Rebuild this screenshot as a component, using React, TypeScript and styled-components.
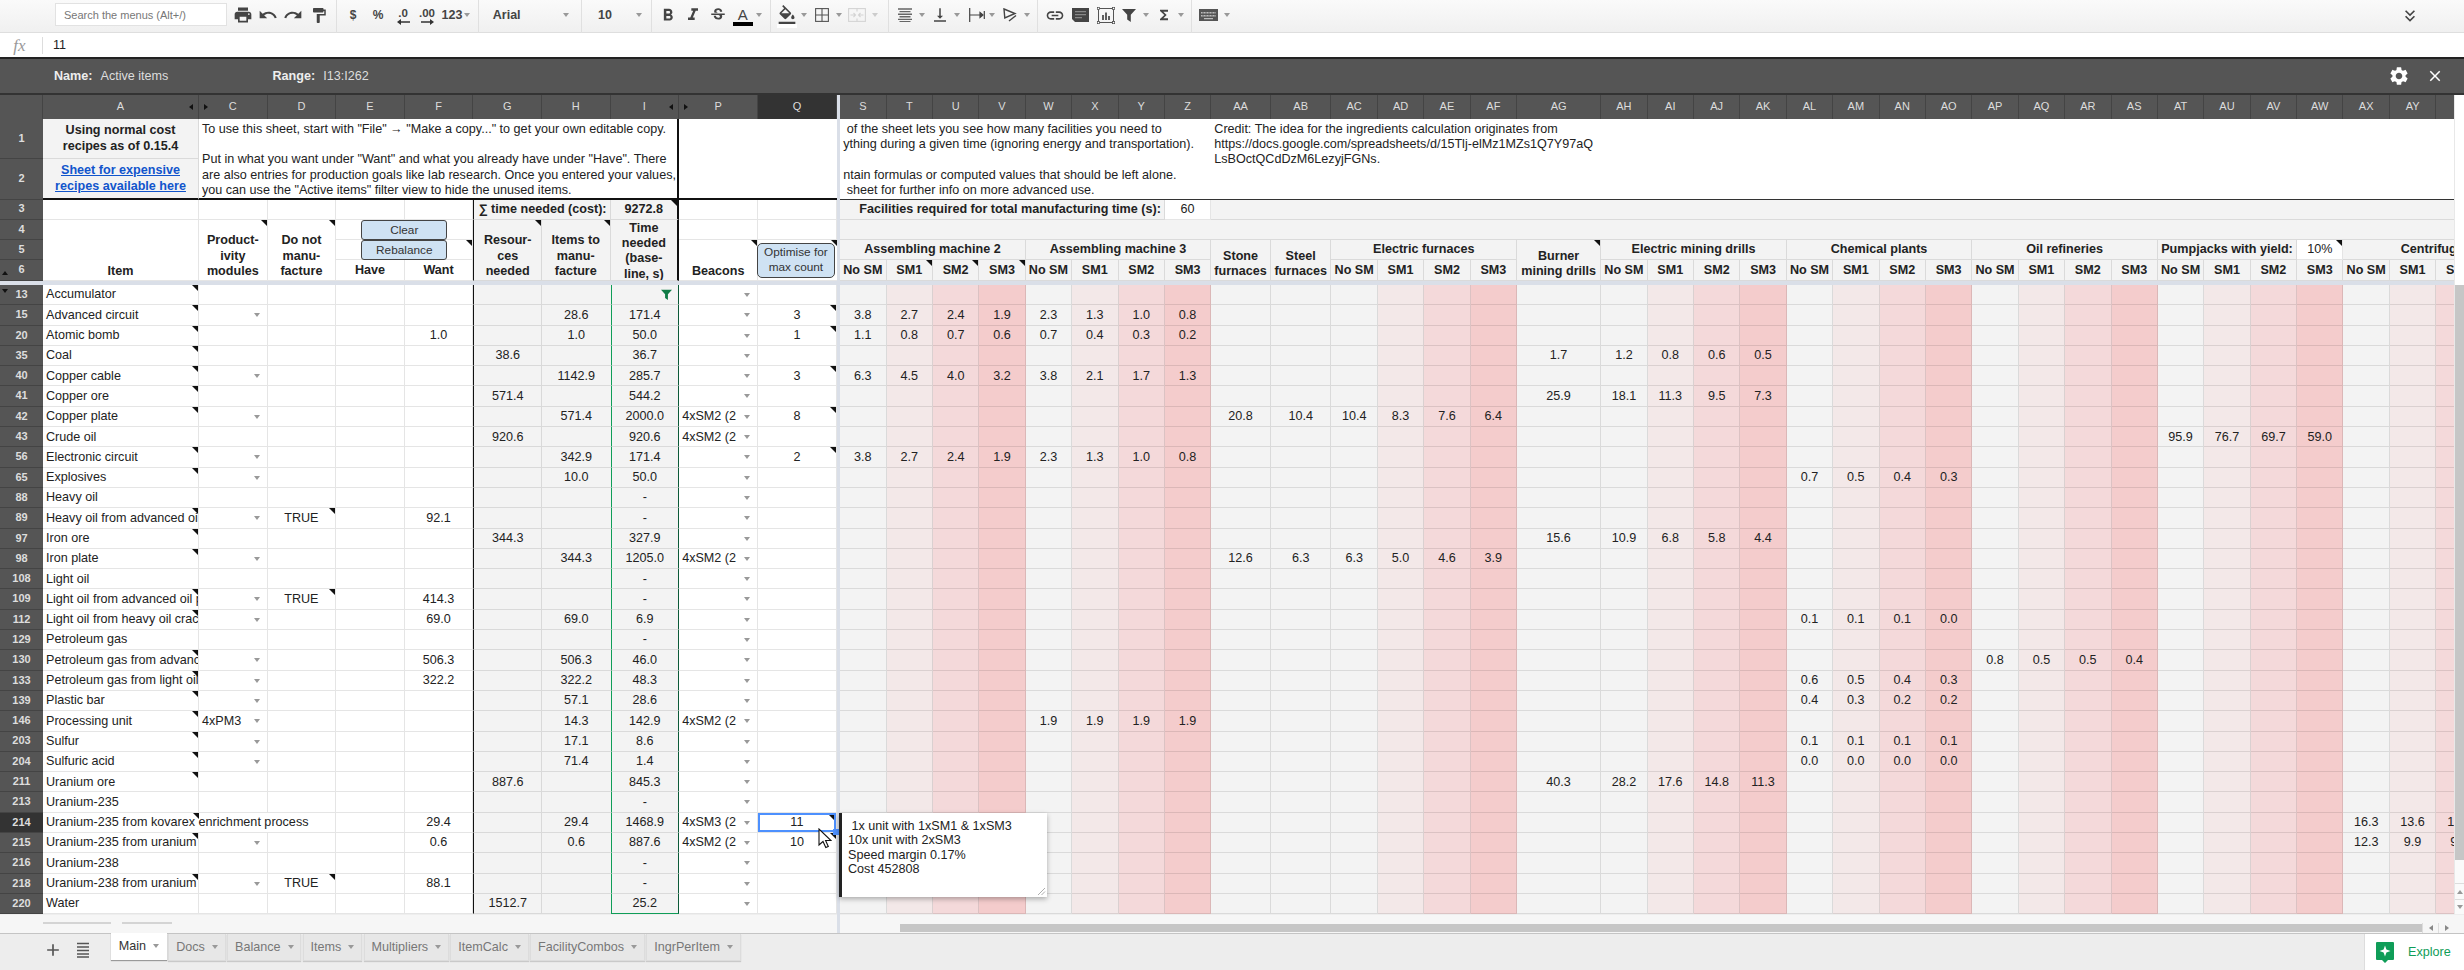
import React from "react";
import styled, { createGlobalStyle } from "styled-components";
import {
  MdPrint, MdUndo, MdRedo, MdFormatPaint, MdFormatBold, MdFormatItalic, MdStrikethroughS,
  MdFormatColorFill, MdVerticalAlignBottom, MdLink, MdFunctions, MdSettings, MdClose, MdAdd,
  MdKeyboardDoubleArrowDown,
} from "react-icons/md";

const FONT = `"Liberation Sans", Arial, sans-serif`;

const Global = createGlobalStyle`
  html, body { margin: 0; padding: 0; background: #fff; overflow: hidden; }
  body { font-family: ${FONT}; }
  * { box-sizing: border-box; }
`;

const Page = styled.div`
  width: 2464px; height: 970px; display: flex; flex-direction: column; overflow: hidden;
`;

/* ---------- toolbar ---------- */
const Toolbar = styled.div`
  height: 33px; flex: none; display: flex; align-items: stretch; padding-left: 55px;
  background: linear-gradient(#fafafa, #f0f0f0); border-bottom: 1px solid #dedede; position: relative;
`;
const SearchBox = styled.div`
  width: 172px; height: 23px; margin-top: 3px; background: #fff; border: 1px solid #e2e2e2;
  display: flex; align-items: center; padding-left: 8px; font-size: 11px; color: #777;
`;
const Tool = styled.div<{ $w: number; $ml: number }>`
  flex: none; width: ${(p) => p.$w}px; margin-left: ${(p) => p.$ml}px; position: relative;
  display: flex; align-items: center; justify-content: center; color: #444; padding-bottom: 2px;
  white-space: nowrap;
`;
const ToolDivider = styled.div`
  width: 100%; height: 33px; background: #e0e0e0; margin-bottom: -2px;
`;
const ToolText = styled.span<{ $size?: number; $c?: string }>`
  font-size: ${(p) => p.$size ?? 12}px; font-weight: 700; color: ${(p) => p.$c ?? "#444"};
`;
const Caret = styled.i<{ $light?: boolean }>`
  display: block; width: 0; height: 0; border-left: 3.5px solid transparent; border-right: 3.5px solid transparent;
  border-top: 4px solid ${(p) => (p.$light ? "#ccc" : "#999")};
`;
const DecStack = styled.span`
  display: flex; flex-direction: column; align-items: center; line-height: 11px; color: #444;
  font-size: 11.5px; font-weight: 700; margin-top: 2px;
`;
const ColorStack = styled.span`
  display: flex; flex-direction: column; align-items: center;
`;
const ColorBar = styled.i<{ $c: string }>`
  display: block; width: 20px; height: 4px; background: ${(p) => p.$c};
`;
const TextA = styled.span`
  font-size: 15px; line-height: 15px; color: #444; font-weight: 400; margin-top: 3px;
`;
const RightChevron = styled.div`
  position: absolute; left: 2400px; top: 6px; color: #444; display: flex;
`;

const Arrow = ({ dir }: { dir: "l" | "r" }) => (
  <svg width="13" height="6" viewBox="0 0 13 6">
    {dir === "l" ? <path d="M13 2.2H4V0L0 3l4 3V3.8h9z" fill="#333" /> : <path d="M0 2.2h9V0l4 3-4 3V3.8H0z" fill="#333" />}
  </svg>
);
const BorderIcon = ({ c = "#555" }: { c?: string }) => (
  <svg width="14" height="14" viewBox="0 0 14 14" fill="none" stroke={c} strokeWidth="1.1">
    <rect x=".6" y=".6" width="12.8" height="12.8" /><path d="M7 .6v12.8M.6 7h12.8" />
  </svg>
);
const MergeIcon = () => (
  <svg width="18" height="14" viewBox="0 0 18 14" fill="none" stroke="#d4d4d4" strokeWidth="1.1">
    <rect x=".6" y=".6" width="16.8" height="12.8" /><path d="M9 .6v3M9 10.4v3M2.5 7h4.5M15.5 7H11M5.5 5l2 2-2 2M12.5 5l-2 2 2 2" />
  </svg>
);
const AlignIcon = () => (
  <svg width="14" height="14" viewBox="0 0 14 14" stroke="#666" strokeWidth="1.4">
    <path d="M0 1h14M1.5 3.6h11M0 6.2h14M1.5 8.8h11M0 11.4h14M1.5 13.6h11" />
  </svg>
);
const WrapIcon = () => (
  <svg width="16" height="14" viewBox="0 0 16 14" fill="none" stroke="#444" strokeWidth="1.2">
    <path d="M.7 0v14M15.3 3v8M1 7h11.5" /><path d="M11 4.5 14 7l-3 2.5z" fill="#444" />
  </svg>
);
const RotateIcon = () => (
  <svg width="14" height="14" viewBox="0 0 14 14" fill="none" stroke="#444" strokeWidth="1.4">
    <path d="M1 1l11 4.5L1.8 10z" fill="none" /><path d="M6 13l7-5.5" />
  </svg>
);
const CommentIcon = () => (
  <svg width="17" height="14" viewBox="0 0 17 14">
    <path d="M0 0h17v14H3L0 11z" fill="#444" /><path d="M3 3h11v1.2H3zM3 6h11v1.2H3zM3 9h7v1.2H3z" fill="#888" />
  </svg>
);
const ChartIcon = () => (
  <svg width="18" height="17" viewBox="0 0 18 17" fill="none" stroke="#444">
    <rect x="1.5" y="1.5" width="15" height="14" strokeWidth=".9" />
    <path d="M6 13V8M9 13V5.5M12 13V9" strokeWidth="1.7" />
    <rect x=".3" y=".3" width="2.2" height="2.2" fill="#fff" strokeWidth=".7" /><rect x="15.5" y=".3" width="2.2" height="2.2" fill="#fff" strokeWidth=".7" />
    <rect x=".3" y="14.5" width="2.2" height="2.2" fill="#fff" strokeWidth=".7" /><rect x="15.5" y="14.5" width="2.2" height="2.2" fill="#fff" strokeWidth=".7" />
  </svg>
);
const FunnelIcon = ({ c = "#444", s = 14 }: { c?: string; s?: number }) => (
  <svg width={s} height={s} viewBox="0 0 14 14"><path d="M0 1h14L8.8 6.8V14L5.2 11.5V6.8z" fill={c} /></svg>
);
const KeyboardIcon = () => (
  <svg width="19" height="12" viewBox="0 0 19 12">
    <rect width="19" height="12" fill="#555" /><path d="M2 3h15v1.5H2zM2 6h15v1.5H2zM5 9h9v1.2H5z" fill="#bbb" />
    <path d="M4 2.5v5M7 2.5v5M10 2.5v5M13 2.5v5M16 2.5v5" stroke="#555" strokeWidth=".8" />
  </svg>
);

type ToolItem = { c: number; w: number; el: React.ReactNode };
const sep = (c: number): ToolItem => ({ c, w: 1, el: <ToolDivider /> });
const car = (c: number, light?: boolean): ToolItem => ({ c, w: 7, el: <Caret $light={light} /> });
const ic = (c: number, w: number, el: React.ReactNode): ToolItem => ({ c, w, el });

const TOOLS: ToolItem[] = [
  ic(242.5, 20, <MdPrint size={20} />),
  ic(268, 20, <MdUndo size={20} />),
  ic(293, 20, <MdRedo size={20} />),
  ic(319, 18, <MdFormatPaint size={21} />),
  sep(336),
  ic(353, 12, <ToolText>$</ToolText>),
  ic(378, 14, <ToolText>%</ToolText>),
  ic(403, 16, <DecStack><span>.0</span><Arrow dir="l" /></DecStack>),
  ic(427, 18, <DecStack><span>.00</span><Arrow dir="r" /></DecStack>),
  ic(452, 20, <ToolText $size={12.5}>123</ToolText>),
  car(466.7),
  sep(478.7),
  ic(506.7, 32, <ToolText $size={12.5}>Arial</ToolText>),
  car(566),
  sep(582),
  ic(605, 14, <ToolText $size={12.5}>10</ToolText>),
  car(639),
  sep(651.7),
  ic(668, 20, <MdFormatBold size={21} />),
  ic(692.7, 20, <MdFormatItalic size={20} />),
  ic(718, 20, <MdStrikethroughS size={18} />),
  ic(742.7, 20, <ColorStack><TextA>A</TextA><ColorBar $c="#000" /></ColorStack>),
  car(759),
  sep(771),
  ic(787, 20, <ColorStack><MdFormatColorFill size={20} style={{ marginTop: 2, marginBottom: -1 }} /><ColorBar $c="#fff" /></ColorStack>),
  car(804),
  ic(822, 14, <BorderIcon />),
  car(838.7),
  ic(856.7, 18, <MergeIcon />),
  car(875, true),
  sep(889),
  ic(905, 14, <AlignIcon />),
  car(921.7),
  ic(940, 18, <MdVerticalAlignBottom size={22} />),
  car(956.7),
  ic(976.7, 16, <WrapIcon />),
  car(991.7),
  ic(1010, 14, <RotateIcon />),
  car(1026.7),
  sep(1038),
  ic(1055, 20, <MdLink size={23} />),
  ic(1081, 17, <CommentIcon />),
  ic(1105.7, 18, <ChartIcon />),
  ic(1129, 14, <FunnelIcon />),
  car(1146),
  ic(1164, 16, <MdFunctions size={20} />),
  car(1181),
  sep(1192),
  ic(1209, 19, <KeyboardIcon />),
  car(1227),
];

const ToolRow = () => {
  let right = 227;
  return (
    <>
      {TOOLS.map((t, i) => {
        const left = t.c - t.w / 2;
        const ml = left - right;
        right = left + t.w;
        return <Tool key={i} $w={t.w} $ml={ml}>{t.el}</Tool>;
      })}
    </>
  );
};

/* ---------- formula & filter bars ---------- */
const FormulaBar = styled.div`
  height: 24px; flex: none; display: flex; align-items: center; background: #fff;
`;
const FxMark = styled.span`
  width: 43px; text-align: center; font-family: "Liberation Serif", serif; font-style: italic;
  font-size: 17px; color: #999; border-right: 1px solid #ddd; line-height: 17px; padding-right: 3px;
`;
const FormulaValue = styled.span`
  margin-left: 10px; font-size: 12.6px; color: #222;
`;
const FilterBar = styled.div`
  height: 38px; flex: none; background: #555; border-top: 2px solid #222; border-bottom: 2px solid #333;
  display: flex; align-items: center; padding-left: 54px; color: #eee; font-size: 12.6px;
`;
const FilterLabel = styled.b`
  font-weight: 700; margin-right: 8px;
`;
const FilterValue = styled.span<{ $w: number }>`
  width: ${(p) => p.$w}px; color: #ddd;
`;
const FilterActions = styled.div`
  margin-left: auto; display: flex; align-items: center; gap: 15.5px; padding-right: 20.5px; color: #fff;
`;

/* ---------- sheet ---------- */
const W = 46.4;
const FROZEN = [43, 156, 68.6, 68.6, 68.6, 68.6, 68.6, 68.6, 68.6, 79, 78.5, 3.5];
const FAC_NAMES = ["S","T","U","V","W","X","Y","Z","AA","AB","AC","AD","AE","AF","AG","AH","AI","AJ","AK","AL","AM","AN","AO","AP","AQ","AR","AS","AT","AU","AV","AW","AX","AY","AZ","BA"];
const FAC_TINT = [0,1,2,3,0,1,2,3,0,0,0,1,2,3,0,0,1,2,3,0,1,2,3,0,1,2,3,0,1,2,3,0,1,2,3];
const FAC_W: Record<string, number> = { AA: 59.6, AB: 60.6, AG: 84.2 };
const TINTS = ["#f3f3f3", "#f3e8e8", "#f4d9da", "#f4cccc"];
const colTemplate = [...FROZEN, ...FAC_NAMES.map((n) => FAC_W[n] ?? W)].map((v) => `${v}px`).join(" ");

const Stage = styled.div`
  flex: none; height: 819.3px; display: flex;
`;
const GridClip = styled.div`
  width: 2454px; height: 100%; overflow: hidden; position: relative; background: #fff;
`;
const Sheet = styled.div`
  display: grid; width: max-content; color: #222; font-size: 12.6px; line-height: 15.4px;
  grid-template-columns: ${colTemplate};
  grid-template-rows: 23.5px 40.5px 40.5px 20px 20.5px 20px 20.5px 4.5px repeat(31, 20.3px);
`;
const ColHead = styled.div<{ $active?: boolean; $tri?: "l" | "r" }>`
  background: ${(p) => (p.$active ? "#333" : "#555")}; color: #ddd; font-size: 11px; position: relative;
  border-right: 1px solid #444; display: flex; align-items: center; justify-content: center;
  ${(p) => p.$tri === "r" && `&::after { content: ""; position: absolute; right: 5px; top: 9px; border-right: 4px solid #111; border-top: 3.5px solid transparent; border-bottom: 3.5px solid transparent; }`}
  ${(p) => p.$tri === "l" && `&::after { content: ""; position: absolute; left: 5px; top: 9px; border-left: 4px solid #111; border-top: 3.5px solid transparent; border-bottom: 3.5px solid transparent; }`}
`;
const RowHead = styled.div<{ $active?: boolean; $rs?: number; $mark?: "up" | "down" }>`
  background: ${(p) => (p.$active ? "#333" : "#555")}; color: #ddd; font-size: 11px; font-weight: 700;
  border-bottom: 1px solid #444; display: flex; align-items: center; justify-content: center; position: relative;
  ${(p) => p.$mark === "up" && `&::after { content: ""; position: absolute; left: 2px; top: 11px; border-bottom: 4px solid #111; border-left: 3.5px solid transparent; border-right: 3.5px solid transparent; }`}
  ${(p) => p.$mark === "down" && `&::after { content: ""; position: absolute; left: 2px; top: 4px; border-top: 4px solid #111; border-left: 3.5px solid transparent; border-right: 3.5px solid transparent; }`}
`;
const FreezeV = styled.div<{ $rs?: number }>`
  background: #dadfe8; ${(p) => (p.$rs ? `grid-row: span ${p.$rs};` : "")}
`;
const FreezeH = styled.div`
  grid-column: 1 / -1; background: #dadfe8;
`;
type CellProps = {
  $cs?: number; $rs?: number; $bg?: string; $bold?: boolean; $left?: boolean; $right?: boolean;
  $note?: boolean; $va?: "top" | "bottom"; $wrap?: boolean; $lb?: string; $rb?: string; $bb?: string;
  $noRb?: boolean; $visible?: boolean;
};
const Cell = styled.div<CellProps>`
  position: relative; min-width: 0; display: flex; padding: 1px 3px 0;
  ${(p) => (p.$cs ? `grid-column: span ${p.$cs};` : "")}
  ${(p) => (p.$rs ? `grid-row: span ${p.$rs};` : "")}
  ${(p) => (p.$bg ? `background: ${p.$bg};` : "")}
  font-weight: ${(p) => (p.$bold ? 700 : 400)};
  align-items: ${(p) => (p.$va === "top" ? "flex-start" : p.$va === "bottom" ? "flex-end" : "center")};
  justify-content: ${(p) => (p.$left ? "flex-start" : p.$right ? "flex-end" : "center")};
  text-align: ${(p) => (p.$left ? "left" : "center")};
  white-space: ${(p) => (p.$wrap ? "pre-wrap" : "nowrap")};
  overflow: ${(p) => (p.$visible ? "visible" : "hidden")};
  border-right: ${(p) => p.$rb ?? (p.$noRb ? "0" : "1px solid rgba(0,0,0,.1)")};
  border-bottom: ${(p) => p.$bb ?? "1px solid rgba(0,0,0,.1)"};
  ${(p) => (p.$lb ? `border-left: ${p.$lb};` : "")}
  ${(p) => p.$note && `&::after { content: ""; position: absolute; top: 0; right: 0; border-top: 6px solid #111; border-left: 6px solid transparent; }`}
`;
const SelectedCell = styled(Cell)`
  overflow: visible; z-index: 3; box-shadow: inset 0 0 0 2px #4d90fe; &::after { border-top-width: 5px; border-left-width: 5px; top: 2px; right: 2px; }
`;
const FillHandle = styled.i`
  position: absolute; right: -3px; bottom: -3px; width: 6px; height: 6px; background: #4d90fe; border: 0;
`;
const Dropdown = styled.i`
  position: absolute; right: 7px; top: 8px; border-left: 3.5px solid transparent; border-right: 3.5px solid transparent;
  border-top: 4px solid #999;
`;
const FilterMark = styled.span`
  position: absolute; right: 6px; top: 4px; display: flex;
`;
const HeaderButton = styled.div`
  width: 86px; height: 20.5px; flex: none; background: #cfe2f3; border: 1.5px solid #444; border-radius: 3px; color: #333;
  font-size: 11.8px; display: flex; align-items: center; justify-content: center; font-weight: 400; line-height: 14px;
`;
const OptimiseButton = styled(HeaderButton)`
  width: 78px; height: 35px; margin: 4px 0 2px -3px; border-radius: 5px; align-self: flex-end; line-height: 15px;
`;
const LinkText = styled.span`
  color: #1155cc; text-decoration: underline; font-weight: 700;
`;
const NoteText = styled.div`
  white-space: pre; padding-top: 2px; font-size: 12.6px; line-height: 15.4px; text-align: left;
`;

const NoteBox = styled.div`
  position: absolute; left: 839px; top: 718px; width: 208px; height: 84px; background: #fff; z-index: 5;
  border-left: 3px solid #222; box-shadow: 0 2px 5px rgba(0,0,0,.3); padding: 6px 6px; font-size: 12.6px;
  line-height: 14.4px; color: #222; white-space: pre;
`;
const NoteGrip = styled.svg`
  position: absolute; right: 1px; bottom: 1px;
`;
const CursorMark = styled.svg`
  position: absolute; left: 818px; top: 733px; z-index: 6;
`;

const VScroll = styled.div`
  width: 10px; height: 100%; background: #fafafa; border-left: 1px solid #e8e8e8; display: flex; flex-direction: column;
`;
const VSpacer = styled.div`
  height: 190px; flex: none; background: #fff;
`;
const VThumb = styled.div`
  height: 575px; flex: none; background: #c6c6c6;
`;
const VFill = styled.div`
  flex: 1;
`;
const VBtn = styled.div<{ $up?: boolean }>`
  height: 15.5px; flex: none; border-top: 1px solid #ddd; display: flex; align-items: center; justify-content: center;
  &::after { content: ""; border-left: 3px solid transparent; border-right: 3px solid transparent;
    ${(p) => (p.$up ? "border-bottom: 4px solid #999;" : "border-top: 4px solid #999;")} }
`;

/* ---------- bottom ---------- */
const ScrollStrip = styled.div`
  height: 18.7px; flex: none; display: flex; background: #f6f6f6; padding-top: 0;
`;
const StripLeft = styled.div`
  width: 836.5px; flex: none; padding: 7px 0 0 43px; display: flex; gap: 11px; align-items: flex-start;
  border-top: 1px solid #eee;
`;
const StripLine = styled.i<{ $w: number }>`
  display: block; width: ${(p) => p.$w}px; height: 1.5px; background: #d4d4d4;
`;
const StripFreeze = styled.div`
  width: 3.5px; flex: none; background: #dadfe8;
`;
const StripRight = styled.div`
  flex: 1; padding: 9px 0 0 60px; display: flex; align-items: flex-start; border-top: 1px solid #eee;
`;
const HThumb = styled.div`
  width: 1522px; height: 8px; background: #c6c6c6;
`;
const HBtn = styled.div<{ $left?: boolean }>`
  width: 16px; height: 10px; margin-top: -1px; border-left: 1px solid #ddd; display: flex; align-items: center; justify-content: center;
  &::after { content: ""; border-top: 3px solid transparent; border-bottom: 3px solid transparent;
    ${(p) => (p.$left ? "border-right: 4px solid #888;" : "border-left: 4px solid #888;")} }
`;
const TabBar = styled.div`
  height: 37.4px; flex: none; background: #ededed; border-top: 1px solid #c4c4c4; display: flex; align-items: flex-start;
  padding-left: 43px; position: relative;
`;
const TabTool = styled.div<{ $w: number; $ml?: number }>`
  width: ${(p) => p.$w}px; margin-left: ${(p) => p.$ml ?? 0}px; height: 33px; display: flex; align-items: center;
  justify-content: center; color: #555;
`;
const Tabs = styled.div`
  display: flex; gap: 1.5px; margin-left: 18px;
`;
const Tab = styled.div<{ $active?: boolean }>`
  height: 27px; margin-top: ${(p) => (p.$active ? -1 : 0)}px;
  background: ${(p) => (p.$active ? "#fff" : "#e7e7e7")}; padding: 0 6.8px; display: flex; align-items: center; gap: 7px;
  color: ${(p) => (p.$active ? "#333" : "#777")}; font-size: 12.6px;
  border: 1px solid ${(p) => (p.$active ? "#fff" : "#dcdcdc")}; border-top: 0;
  box-shadow: 0 1px 1px ${(p) => (p.$active ? "rgba(0,0,0,.35)" : "rgba(0,0,0,.15)")};
`;
const ExploreBox = styled.div`
  margin-left: auto; width: 100px; height: 37px; background: #fff; border-left: 1px solid #ddd; display: flex;
  align-items: center; padding-left: 11px; gap: 14px; color: #0f9d58; font-size: 12.6px;
`;

/* ---------- data ---------- */
type Row = {
  n: number; name: string; note?: boolean; dd?: boolean; c?: string; d?: string; f?: string; g?: string;
  h?: string; i?: string; p?: string; q?: string; qn?: boolean; v?: [string, string[]];
};
const R = (n: number, name: string, o: Partial<Row> = {}): Row => ({ n, name, ...o });
const MA2 = ["3.8", "2.7", "2.4", "1.9", "2.3", "1.3", "1.0", "0.8"];
const ROWS: Row[] = [
  R(13, "Accumulator", { note: true }),
  R(15, "Advanced circuit", { note: true, dd: true, h: "28.6", i: "171.4", q: "3", qn: true, v: ["S", MA2] }),
  R(20, "Atomic bomb", { note: true, f: "1.0", h: "1.0", i: "50.0", q: "1", qn: true, v: ["S", ["1.1","0.8","0.7","0.6","0.7","0.4","0.3","0.2"]] }),
  R(35, "Coal", { note: true, g: "38.6", i: "36.7", v: ["AG", ["1.7","1.2","0.8","0.6","0.5"]] }),
  R(40, "Copper cable", { note: true, dd: true, h: "1142.9", i: "285.7", q: "3", qn: true, v: ["S", ["6.3","4.5","4.0","3.2","3.8","2.1","1.7","1.3"]] }),
  R(41, "Copper ore", { note: true, g: "571.4", i: "544.2", v: ["AG", ["25.9","18.1","11.3","9.5","7.3"]] }),
  R(42, "Copper plate", { note: true, dd: true, h: "571.4", i: "2000.0", p: "4xSM2 (2", q: "8", qn: true, v: ["AA", ["20.8","10.4","10.4","8.3","7.6","6.4"]] }),
  R(43, "Crude oil", { g: "920.6", i: "920.6", p: "4xSM2 (2", v: ["AT", ["95.9","76.7","69.7","59.0"]] }),
  R(56, "Electronic circuit", { note: true, dd: true, h: "342.9", i: "171.4", q: "2", qn: true, v: ["S", MA2] }),
  R(65, "Explosives", { note: true, dd: true, h: "10.0", i: "50.0", v: ["AL", ["0.7","0.5","0.4","0.3"]] }),
  R(88, "Heavy oil", { i: "-" }),
  R(89, "Heavy oil from advanced oil processing", { note: true, dd: true, d: "TRUE", f: "92.1", i: "-" }),
  R(97, "Iron ore", { note: true, g: "344.3", i: "327.9", v: ["AG", ["15.6","10.9","6.8","5.8","4.4"]] }),
  R(98, "Iron plate", { note: true, dd: true, h: "344.3", i: "1205.0", p: "4xSM2 (2", v: ["AA", ["12.6","6.3","6.3","5.0","4.6","3.9"]] }),
  R(108, "Light oil", { i: "-" }),
  R(109, "Light oil from advanced oil processing", { note: true, dd: true, d: "TRUE", f: "414.3", i: "-" }),
  R(112, "Light oil from heavy oil cracking", { note: true, dd: true, f: "69.0", h: "69.0", i: "6.9", v: ["AL", ["0.1","0.1","0.1","0.0"]] }),
  R(129, "Petroleum gas", { i: "-" }),
  R(130, "Petroleum gas from advanced oil processing", { note: true, dd: true, f: "506.3", h: "506.3", i: "46.0", v: ["AP", ["0.8","0.5","0.5","0.4"]] }),
  R(133, "Petroleum gas from light oil cracking", { note: true, dd: true, f: "322.2", h: "322.2", i: "48.3", v: ["AL", ["0.6","0.5","0.4","0.3"]] }),
  R(139, "Plastic bar", { note: true, dd: true, h: "57.1", i: "28.6", v: ["AL", ["0.4","0.3","0.2","0.2"]] }),
  R(146, "Processing unit", { note: true, dd: true, c: "4xPM3", h: "14.3", i: "142.9", p: "4xSM2 (2", v: ["W", ["1.9","1.9","1.9","1.9"]] }),
  R(203, "Sulfur", { note: true, dd: true, h: "17.1", i: "8.6", v: ["AL", ["0.1","0.1","0.1","0.1"]] }),
  R(204, "Sulfuric acid", { note: true, dd: true, h: "71.4", i: "1.4", v: ["AL", ["0.0","0.0","0.0","0.0"]] }),
  R(211, "Uranium ore", { note: true, g: "887.6", i: "845.3", v: ["AG", ["40.3","28.2","17.6","14.8","11.3"]] }),
  R(213, "Uranium-235", { i: "-" }),
  R(214, "Uranium-235 from kovarex enrichment process", { note: true, f: "29.4", h: "29.4", i: "1468.9", p: "4xSM3 (2", q: "11", v: ["AX", ["16.3","13.6","11.7"]] }),
  R(215, "Uranium-235 from uranium processing", { note: true, dd: true, f: "0.6", h: "0.6", i: "887.6", p: "4xSM2 (2", q: "10", qn: true, v: ["AX", ["12.3","9.9","9.1"]] }),
  R(216, "Uranium-238", { i: "-" }),
  R(218, "Uranium-238 from uranium processing", { note: true, dd: true, d: "TRUE", f: "88.1", i: "-" }),
  R(220, "Water", { g: "1512.7", i: "25.2" }),
];

const GRAY = "#f3f3f3";
const BLACK = "1px solid #111";
const BLACK2 = "2px solid #111";
const GREEN = "1px solid #0f9d58";
const DKGREEN = "1px solid #0b5a38";

const DataRow = ({ r, last }: { r: Row; last: boolean }) => {
  const selected = r.n === 214;
  const overflow = selected;
  const facVals: Record<number, string> = {};
  if (r.v) {
    const start = FAC_NAMES.indexOf(r.v[0]);
    r.v[1].forEach((x, i) => { facVals[start + i] = x; });
  }
  return (
    <>
      <RowHead $active={selected} $mark={r.n === 13 ? "down" : undefined}>{r.n}</RowHead>
      <Cell $left $note={r.note} $visible={overflow} $noRb={overflow}>{r.name}</Cell>
      <Cell $left $noRb={overflow}>
        {r.c}
        {r.dd && <Dropdown />}
      </Cell>
      <Cell $note={!!r.d}>{r.d}</Cell>
      <Cell />
      <Cell>{r.f}</Cell>
      <Cell $bg={GRAY} $lb={BLACK}>{r.g}</Cell>
      <Cell $bg={GRAY} $rb="0">{r.h}</Cell>
      <Cell $bg={GRAY} $lb={GREEN} $rb={DKGREEN} $bb={last ? "1px solid #0f9d58" : undefined} $visible={r.n === 13}>
        {r.i}
        {r.n === 13 && <FilterMark><FunnelIcon c="#0f7b45" s={11} /></FilterMark>}
      </Cell>
      <Cell $left>
        {r.p}
        <Dropdown />
      </Cell>
      {selected ? (
        <SelectedCell $note>
          {r.q}
          <FillHandle />
        </SelectedCell>
      ) : (
        <Cell $note={r.qn}>{r.q}</Cell>
      )}
      <FreezeV />
      {FAC_NAMES.map((_, i) => (
        <Cell key={i} $bg={TINTS[FAC_TINT[i]]}>{facVals[i]}</Cell>
      ))}
    </>
  );
};

const Heads = ({ idx }: { idx: number }) => (
  <Cell $bold $bg={GRAY}>{["No SM", "SM1", "SM2", "SM3"][idx]}</Cell>
);

const App = () => (
  <Page>
    <Global />
    <Toolbar>
      <SearchBox>Search the menus (Alt+/)</SearchBox>
      <ToolRow />
      <RightChevron><MdKeyboardDoubleArrowDown size={20} /></RightChevron>
    </Toolbar>
    <FormulaBar>
      <FxMark>fx</FxMark>
      <FormulaValue>11</FormulaValue>
    </FormulaBar>
    <FilterBar>
      <FilterLabel>Name:</FilterLabel>
      <FilterValue $w={172}>Active items</FilterValue>
      <FilterLabel>Range:</FilterLabel>
      <FilterValue $w={80}>I13:I262</FilterValue>
      <FilterActions>
        <MdSettings size={22} />
        <MdClose size={18} />
      </FilterActions>
    </FilterBar>
    <Stage>
      <GridClip>
        <Sheet>
          {/* column headers */}
          <ColHead />
          <ColHead $tri="r">A</ColHead>
          <ColHead $tri="l">C</ColHead>
          {["D", "E", "F", "G", "H"].map((c) => <ColHead key={c}>{c}</ColHead>)}
          <ColHead $tri="r">I</ColHead>
          <ColHead $tri="l">P</ColHead>
          <ColHead $active>Q</ColHead>
          <FreezeV />
          {FAC_NAMES.map((c) => <ColHead key={c}>{c === "AZ" || c === "BA" ? "" : c}</ColHead>)}

          {/* rows 1-2 */}
          <RowHead>1</RowHead>
          <Cell $bold $bg={GRAY}>Using normal cost<br />recipes as of 0.15.4</Cell>
          <Cell $cs={7} $rs={2} $left $va="top" $rb={BLACK2} $bb={BLACK2}>
            <NoteText>{`To use this sheet, start with "File" → "Make a copy..." to get your own editable copy.

Put in what you want under "Want" and what you already have under "Have". There
are also entries for production goals like lab research. Once you entered your values,
you can use the "Active items" filter view to hide the unused items.`}</NoteText>
          </Cell>
          <Cell $cs={2} $rs={2} $bb={BLACK2} $noRb />
          <FreezeV $rs={2} />
          <Cell $cs={8} $rs={2} $left $va="top" $bb="1px solid #333" $noRb>
            <NoteText>{` of the sheet lets you see how many facilities you need to
ything during a given time (ignoring energy and transportation).

ntain formulas or computed values that should be left alone.
 sheet for further info on more advanced use.`}</NoteText>
          </Cell>
          <Cell $cs={27} $rs={2} $left $va="top" $bb="1px solid #333" $noRb>
            <NoteText>{`Credit: The idea for the ingredients calculation originates from
https://docs.google.com/spreadsheets/d/15Tlj-elMz1MZs1Q7Y97aQ
LsBOctQCdDzM6LezyjFGNs.`}</NoteText>
          </Cell>
          <RowHead>2</RowHead>
          <Cell $bold $bg={GRAY} $bb={BLACK2}><LinkText>Sheet for expensive<br />recipes available here</LinkText></Cell>

          {/* row 3 */}
          <RowHead>3</RowHead>
          <Cell /><Cell /><Cell /><Cell /><Cell />
          <Cell $cs={2} $bold $right $bg={GRAY} $lb={BLACK}>∑ time needed (cost):</Cell>
          <Cell $bold $bg={GRAY} $note $rb={BLACK2}>9272.8</Cell>
          <Cell /><Cell />
          <FreezeV />
          <Cell $cs={7} $bold $right $bg={GRAY}>Facilities required for total manufacturing time (s):</Cell>
          <Cell>60</Cell>
          <Cell $cs={27} $bg={GRAY} />

          {/* rows 4-6 */}
          <RowHead>4</RowHead>
          <Cell $rs={3} $bold $va="bottom">Item</Cell>
          <Cell $rs={3} $bold $va="bottom" $note>Product-<br />ivity<br />modules</Cell>
          <Cell $rs={3} $bold $va="bottom" $note>Do not<br />manu-<br />facture</Cell>
          <Cell $cs={2} $visible><HeaderButton>Clear</HeaderButton></Cell>
          <Cell $rs={3} $bold $va="bottom" $bg={GRAY} $lb={BLACK} $note>Resour-<br />ces<br />needed</Cell>
          <Cell $rs={3} $bold $va="bottom" $bg={GRAY} $note>Items to<br />manu-<br />facture</Cell>
          <Cell $rs={3} $bold $va="top" $bg={GRAY} $rb={BLACK2}>Time<br />needed<br />(base-<br />line, s)</Cell>
          <Cell /><Cell />
          <FreezeV $rs={3} />
          <Cell $cs={35} $bg={GRAY} />

          <RowHead>5</RowHead>
          <Cell $cs={2} $note $visible><HeaderButton>Rebalance</HeaderButton></Cell>
          <Cell $rs={2} $bold $va="bottom" $note>Beacons</Cell>
          <Cell $rs={2} $note $noRb $visible><OptimiseButton>Optimise for<br />max count</OptimiseButton></Cell>
          <Cell $cs={4} $bold $bg={GRAY}>Assembling machine 2</Cell>
          <Cell $cs={4} $bold $bg={GRAY}>Assembling machine 3</Cell>
          <Cell $rs={2} $bold $va="bottom" $bg={GRAY}>Stone<br />furnaces</Cell>
          <Cell $rs={2} $bold $va="bottom" $bg={GRAY}>Steel<br />furnaces</Cell>
          <Cell $cs={4} $bold $bg={GRAY}>Electric furnaces</Cell>
          <Cell $rs={2} $bold $va="bottom" $bg={GRAY} $note>Burner<br />mining drills</Cell>
          <Cell $cs={4} $bold $bg={GRAY}>Electric mining drills</Cell>
          <Cell $cs={4} $bold $bg={GRAY}>Chemical plants</Cell>
          <Cell $cs={4} $bold $bg={GRAY}>Oil refineries</Cell>
          <Cell $cs={3} $bold $bg={GRAY}>Pumpjacks with yield:</Cell>
          <Cell $note>10%</Cell>
          <Cell $cs={4} $bold $bg={GRAY}>Centrifuges</Cell>

          <RowHead $mark="up">6</RowHead>
          <Cell $bold>Have</Cell>
          <Cell $bold>Want</Cell>
          {[0, 1, 2, 3, 0, 1, 2, 3].map((h, i) => (
            h > 0 && i < 4 ? (
              <Cell key={i} $bold $bg={GRAY} $note>{["No SM", "SM1", "SM2", "SM3"][h]}</Cell>
            ) : <Heads key={i} idx={h} />
          ))}
          {[0, 1, 2, 3].map((h) => <Heads key={`e${h}`} idx={h} />)}
          {[0, 1, 2, 3].map((h) => <Heads key={`m${h}`} idx={h} />)}
          {[0, 1, 2, 3].map((h) => <Heads key={`c${h}`} idx={h} />)}
          {[0, 1, 2, 3].map((h) => <Heads key={`o${h}`} idx={h} />)}
          {[0, 1, 2, 3].map((h) => <Heads key={`p${h}`} idx={h} />)}
          {[0, 1, 2, 3].map((h) => <Heads key={`x${h}`} idx={h} />)}

          <FreezeH />

          {ROWS.map((r, i) => (
            <DataRow key={r.n} r={r} last={i === ROWS.length - 1} />
          ))}
        </Sheet>
        <NoteBox>
          {` 1x unit with 1xSM1 & 1xSM3
10x unit with 2xSM3
Speed margin 0.17%
Cost 452808`}
          <NoteGrip width="9" height="9" viewBox="0 0 9 9" stroke="#999" strokeWidth=".8">
            <path d="M1 8l7-7M4.5 8L8 4.5" />
          </NoteGrip>
        </NoteBox>
        <CursorMark width="14" height="21" viewBox="0 0 14 21">
          <path d="M1 1v16l4-3.5 2.8 6 2.5-1.1-2.7-5.9H13z" fill="#fff" stroke="#111" strokeWidth="1.1" />
        </CursorMark>
      </GridClip>
      <VScroll>
        <VSpacer />
        <VThumb />
        <VFill />
        <VBtn $up />
        <VBtn />
      </VScroll>
    </Stage>
    <ScrollStrip>
      <StripLeft>
        <StripLine $w={68} />
        <StripLine $w={50} />
      </StripLeft>
      <StripFreeze />
      <StripRight>
        <HThumb />
        <HBtn $left />
        <HBtn />
      </StripRight>
    </ScrollStrip>
    <TabBar>
      <TabTool $w={20}><MdAdd size={20} /></TabTool>
      <TabTool $w={20} $ml={10}>
        <svg width="12" height="16" viewBox="0 0 12 16" stroke="#555" strokeWidth="1.4">
          <path d="M0 1.5h12M0 5h12M0 8.5h12M0 12h12M0 15h12" />
        </svg>
      </TabTool>
      <Tabs>
        {["Main", "Docs", "Balance", "Items", "Multipliers", "ItemCalc", "FacilityCombos", "IngrPerItem"].map((t, i) => (
          <Tab key={t} $active={i === 0}>
            {t}
            <Caret />
          </Tab>
        ))}
      </Tabs>
      <ExploreBox>
        <svg width="18" height="21" viewBox="0 0 18 21">
          <path d="M1 0h16a1 1 0 0 1 1 1v16a1 1 0 0 1-1 1h-5l-3 3-3-3H1a1 1 0 0 1-1-1V1a1 1 0 0 1 1-1z" fill="#0f9d58" />
          <path d="M9 3.5l1.4 4.1L14.5 9l-4.1 1.4L9 14.5l-1.4-4.1L3.5 9l4.1-1.4z" fill="#fff" />
        </svg>
        Explore
      </ExploreBox>
    </TabBar>
  </Page>
);

export default App;
